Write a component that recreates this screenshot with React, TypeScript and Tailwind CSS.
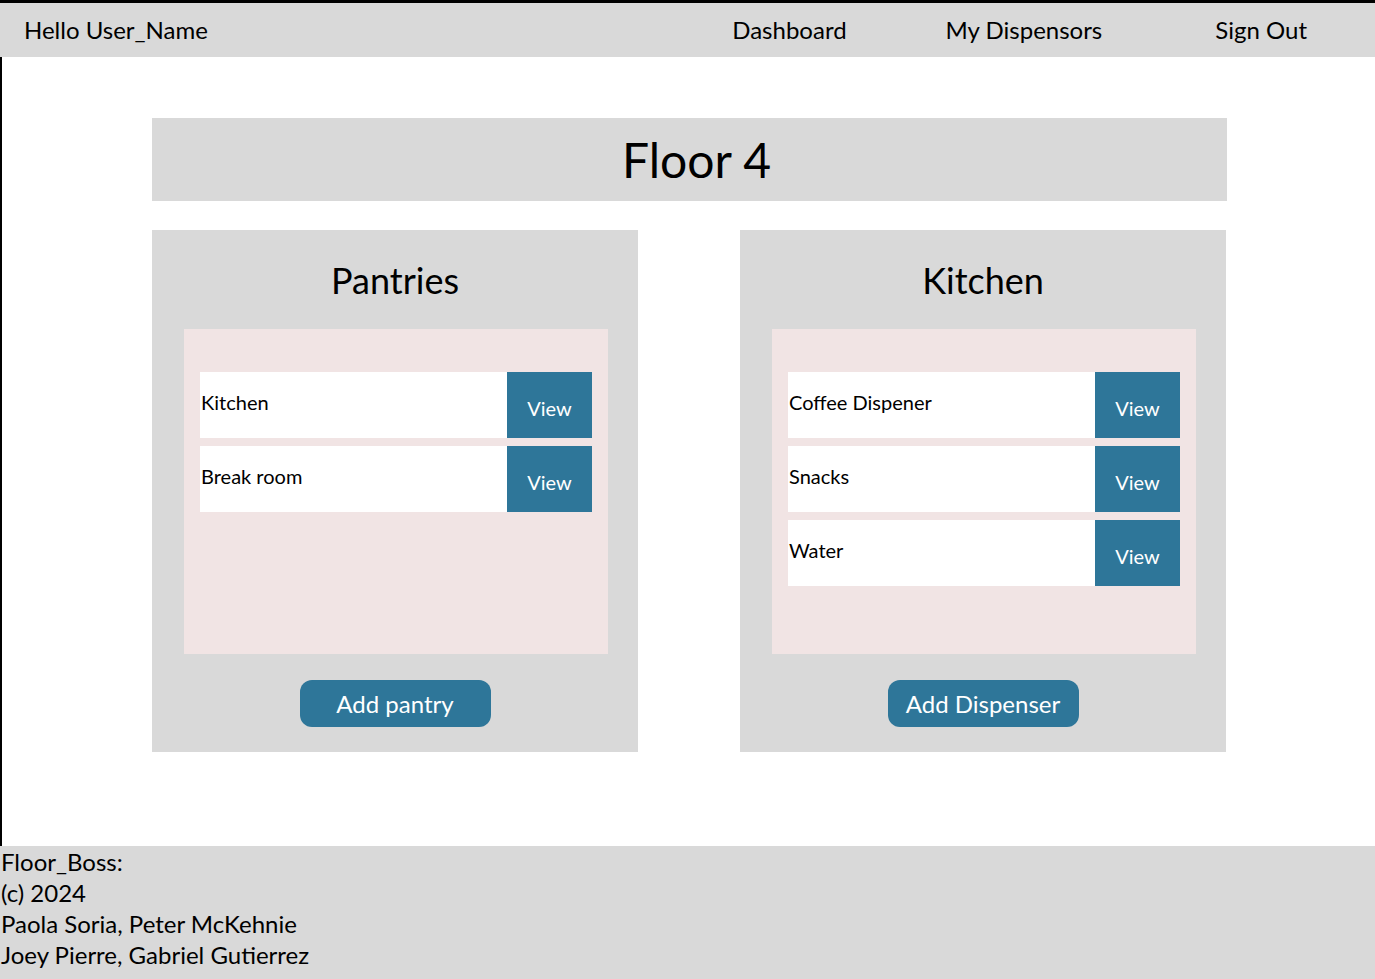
import React from "react";

const font = { fontFamily: "'Lato', 'Noto Sans', sans-serif" };

function Row({ label }: { label: string }) {
  return (
    <div className="flex h-[66px] bg-white">
      <div className="flex-1 pl-[1px] pt-[18px] text-[20px] leading-[24px] text-black">{label}</div>
      <button className="w-[85px] bg-[#2e7699] pt-[6px] text-[20px] text-white">View</button>
    </div>
  );
}

function Card({ title, items, action }: { title: string; items: string[]; action: string }) {
  return (
    <div className="flex h-[522px] w-[486px] flex-col bg-[#d9d9d9]">
      <h2 className="mt-[28px] h-[71px] text-center text-[36px] leading-[44px] text-black">{title}</h2>
      <div className="ml-[32px] flex h-[325px] w-[424px] flex-col gap-[8px] bg-[#f1e4e4] px-[16px] pt-[43px]">
        {items.map((it) => (
          <Row key={it} label={it} />
        ))}
      </div>
      <button className="mx-auto mt-[26px] h-[47px] w-[191px] rounded-[12px] bg-[#2e7699] text-[24px] text-white">
        {action}
      </button>
    </div>
  );
}

export default function App() {
  return (
    <div className="flex h-[979px] w-[1375px] flex-col bg-white" style={font}>
      <header className="flex h-[57px] items-center border-t-[3px] border-black bg-[#d9d9d9] text-[24px] text-black">
        <div className="pl-[24px]">Hello User_Name</div>
        <nav className="ml-auto flex">
          <span className="mr-[99px]">Dashboard</span>
          <span className="mr-[113px]">My Dispensors</span>
          <span className="mr-[68px]">Sign Out</span>
        </nav>
      </header>
      <main className="flex h-[789px] flex-col border-l-2 border-black pl-[150px] pt-[61px]">
        <div className="flex h-[83px] w-[1075px] items-center justify-center bg-[#d9d9d9] pl-[14px]">
          <h1 className="text-[48px] leading-none text-black">Floor 4</h1>
        </div>
        <div className="mt-[29px] flex gap-[102px]">
          <Card title="Pantries" items={["Kitchen", "Break room"]} action="Add pantry" />
          <Card title="Kitchen" items={["Coffee Dispener", "Snacks", "Water"]} action="Add Dispenser" />
        </div>
      </main>
      <footer className="h-[133px] bg-[#d9d9d9] pl-[1px] text-[24px] leading-[31px] text-black">
        <div>Floor_Boss:</div>
        <div>(c) 2024</div>
        <div>Paola Soria, Peter McKehnie</div>
        <div>Joey Pierre, Gabriel Gutierrez</div>
      </footer>
    </div>
  );
}
